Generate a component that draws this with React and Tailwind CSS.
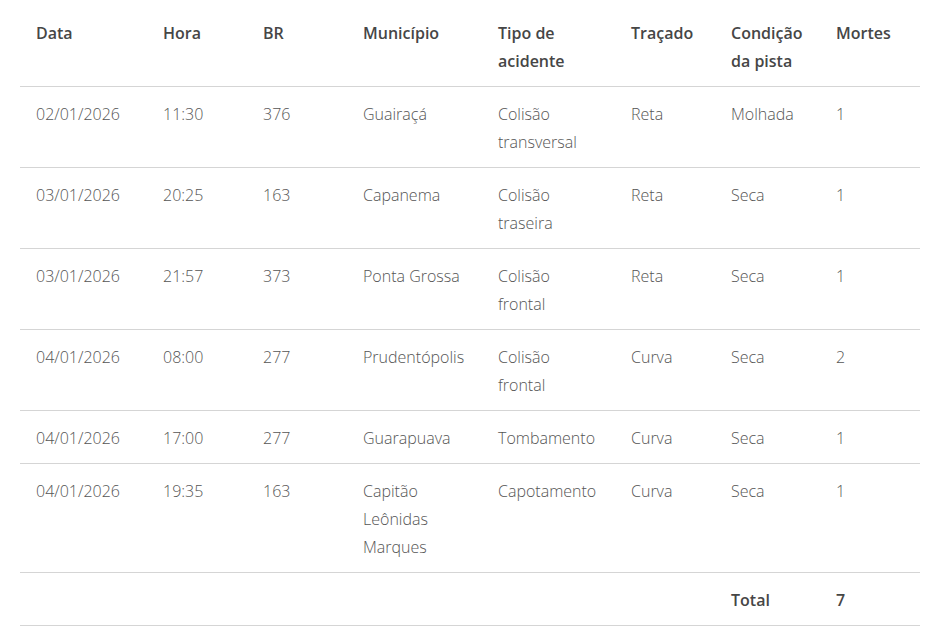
import React from "react";

const rows = [
  ["02/01/2026", "11:30", "376", "Guairaçá", "Colisão transversal", "Reta", "Molhada", "1"],
  ["03/01/2026", "20:25", "163", "Capanema", "Colisão traseira", "Reta", "Seca", "1"],
  ["03/01/2026", "21:57", "373", "Ponta Grossa", "Colisão frontal", "Reta", "Seca", "1"],
  ["04/01/2026", "08:00", "277", "Prudentópolis", "Colisão frontal", "Curva", "Seca", "2"],
  ["04/01/2026", "17:00", "277", "Guarapuava", "Tombamento", "Curva", "Seca", "1"],
  ["04/01/2026", "19:35", "163", "Capitão Leônidas Marques", "Capotamento", "Curva", "Seca", "1"],
];

const headers = ["Data", "Hora", "BR", "Município", "Tipo de acidente", "Traçado", "Condição da pista", "Mortes"];
const widths = ["w-[127px]", "w-[100px]", "w-[100px]", "w-[135px]", "w-[133px]", "w-[100px]", "w-[105px]", "w-[100px]"];

export default function App() {
  return (
    <div className="bg-white w-[945px] h-[638px] px-[20px] pt-[6px] font-['Open_Sans',sans-serif] text-[16px] leading-[28px]">
      <table className="w-[900px] table-fixed border-collapse">
        <colgroup>
          {widths.map((w, i) => (
            <col key={i} className={w} />
          ))}
        </colgroup>
        <thead>
          <tr className="border-b border-[#d5d5d5]">
            {headers.map((h) => (
              <th key={h} className="text-left align-top font-semibold text-[#464646] px-4 pt-[13px] pb-[11px]">
                {h}
              </th>
            ))}
          </tr>
        </thead>
        <tbody>
          {rows.map((r, i) => (
            <tr key={i} className="border-b border-[#d5d5d5]">
              {r.map((c, j) => (
                <td key={j} className="align-top text-[#555555] font-light px-4 pt-[13px] pb-[11px]">
                  {c}
                </td>
              ))}
            </tr>
          ))}
          <tr className="border-b border-[#d5d5d5]">
            <td className="px-4 pt-[13px] pb-[11px]" colSpan={6}></td>
            <td className="px-4 pt-[13px] pb-[11px] font-semibold text-[#464646] align-top">Total</td>
            <td className="px-4 pt-[13px] pb-[11px] font-semibold text-[#464646] align-top">7</td>
          </tr>
        </tbody>
      </table>
    </div>
  );
}
